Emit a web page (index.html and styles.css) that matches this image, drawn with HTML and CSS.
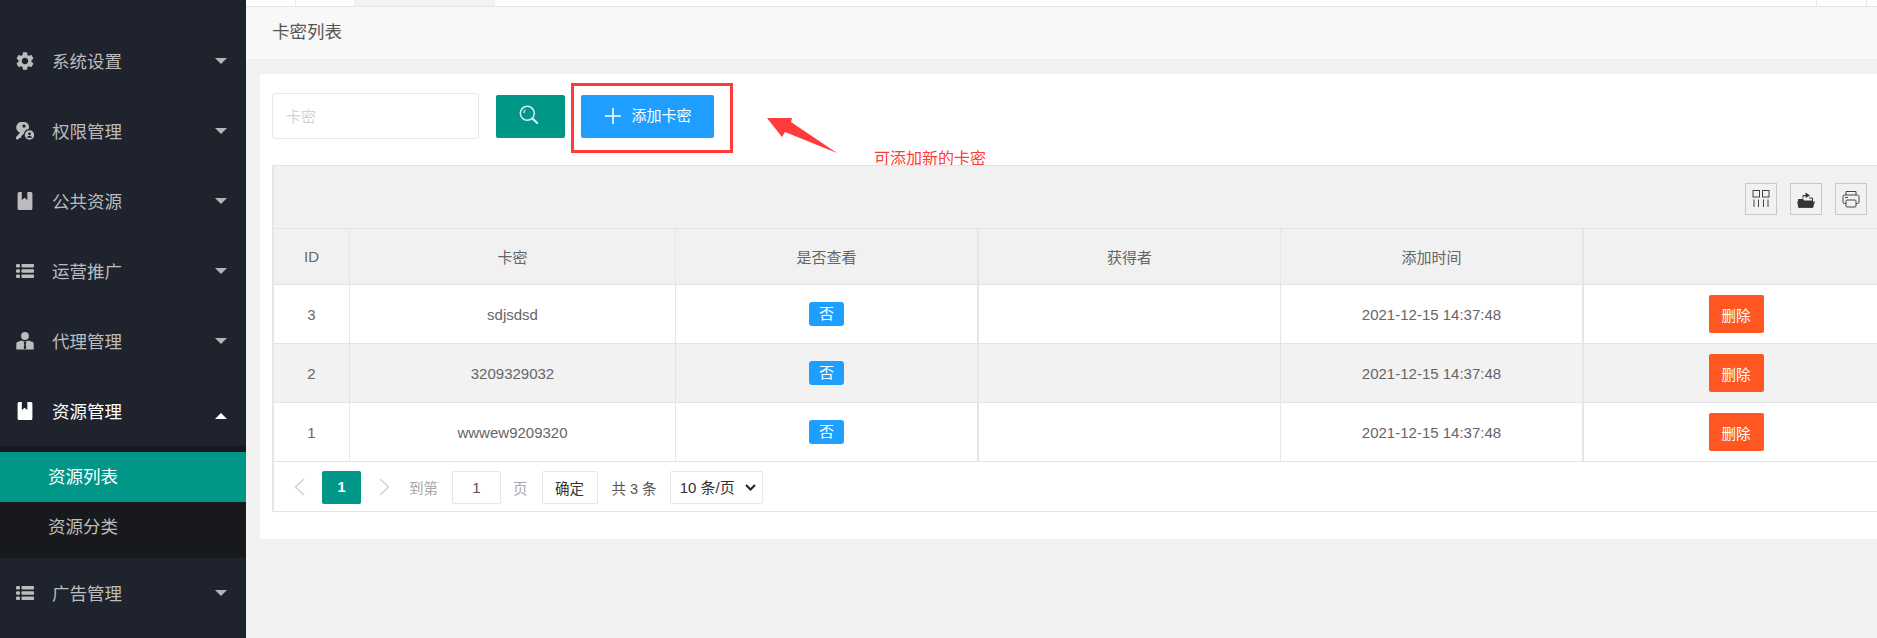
FILE: index.html
```html
<!DOCTYPE html>
<html lang="zh-CN">
<head>
<meta charset="utf-8">
<title>卡密列表</title>
<link rel="stylesheet" href="styles.css">
</head>
<body>
<svg class="defs" width="0" height="0" aria-hidden="true">
  <symbol id="i-book" viewBox="0 0 14 17"><path d="M1.5 0H4v7.5l2.6-2 2.6 2V0h3.3A1.5 1.5 0 0 1 14 1.5v14a1.5 1.5 0 0 1-1.5 1.5h-11A1.5 1.5 0 0 1 0 15.5v-14A1.5 1.5 0 0 1 1.5 0z" fill="currentColor"/></symbol>
  <symbol id="i-list" viewBox="0 0 18 14"><g fill="currentColor"><rect x="0" y="0" width="4" height="3.4" rx="1.2"/><rect x="0" y="5.3" width="4" height="3.4" rx="1.2"/><rect x="0" y="10.6" width="4" height="3.4" rx="1.2"/><rect x="5.5" y="0" width="12.5" height="3.4" rx=".8"/><rect x="5.5" y="5.3" width="12.5" height="3.4" rx=".8"/><rect x="5.5" y="10.6" width="12.5" height="3.4" rx=".8"/></g></symbol>
  <symbol id="i-caret" viewBox="0 0 12 6"><path d="M0 0h12L6 6z" fill="currentColor"/></symbol>
</svg>

<div class="shell">
  <aside class="sidebar">
    <nav class="nav">
      <div class="nav-item nav-stub"><svg class="nav-icon" viewBox="0 0 18 18"><g fill="currentColor"><rect x="1" y="1" width="7" height="7" rx="1"/><rect x="10" y="1" width="7" height="7" rx="1"/><rect x="1" y="10" width="7" height="7" rx="1"/><rect x="10" y="10" width="7" height="7" rx="1"/></g></svg></div>

      <div class="nav-item">
        <svg class="nav-icon" viewBox="2 2 20 20"><path fill="currentColor" d="M19.14 12.94c.04-.3.06-.61.06-.94 0-.32-.02-.64-.07-.94l2.03-1.58a.49.49 0 0 0 .12-.61l-1.92-3.32a.488.488 0 0 0-.59-.22l-2.39.96c-.5-.38-1.03-.7-1.62-.94l-.36-2.54a.484.484 0 0 0-.48-.41h-3.84c-.24 0-.43.17-.47.41l-.36 2.54c-.59.24-1.13.57-1.62.94l-2.39-.96c-.22-.08-.47 0-.59.22L2.74 8.87c-.12.21-.08.47.12.61l2.03 1.58c-.05.3-.09.63-.09.94s.02.64.07.94l-2.03 1.58a.49.49 0 0 0-.12.61l1.92 3.32c.12.22.37.29.59.22l2.39-.96c.5.38 1.03.7 1.62.94l.36 2.54c.05.24.24.41.48.41h3.84c.24 0 .44-.17.47-.41l.36-2.54c.59-.24 1.13-.56 1.62-.94l2.39.96c.22.08.47 0 .59-.22l1.92-3.32c.12-.22.07-.47-.12-.61l-2.01-1.58zM12 15.6c-1.98 0-3.6-1.62-3.6-3.6s1.62-3.6 3.6-3.6 3.6 1.62 3.6 3.6-1.62 3.6-3.6 3.6z"/></svg>
        <span class="nav-label">系统设置</span>
        <svg class="caret"><use href="#i-caret"/></svg>
      </div>

      <div class="nav-item">
        <svg class="nav-icon" viewBox="0 0 18 18"><path fill="currentColor" fill-rule="evenodd" d="M8 0a5 5 0 0 1 4.6 7A5.6 5.6 0 0 0 8 11.5L5.2 14.3 5.2 16 3.4 16 2 17.4.6 17.4 0 16.8 0 15l4-4.2A5 5 0 0 1 8 0zm0 2.4a1.7 1.7 0 1 0 0 3.4 1.7 1.7 0 0 0 0-3.4z"/><circle cx="13.5" cy="13" r="4.7" fill="currentColor"/><circle cx="13.5" cy="11.8" r="1.4" fill="#1f232e"/><path fill="#1f232e" d="M10.9 15.8c.3-1.4 1.3-2.1 2.6-2.1s2.3.7 2.6 2.1z"/></svg>
        <span class="nav-label">权限管理</span>
        <svg class="caret"><use href="#i-caret"/></svg>
      </div>

      <div class="nav-item">
        <svg class="nav-icon"><use href="#i-book"/></svg>
        <span class="nav-label">公共资源</span>
        <svg class="caret"><use href="#i-caret"/></svg>
      </div>

      <div class="nav-item">
        <svg class="nav-icon"><use href="#i-list"/></svg>
        <span class="nav-label">运营推广</span>
        <svg class="caret"><use href="#i-caret"/></svg>
      </div>

      <div class="nav-item">
        <svg class="nav-icon" viewBox="0 0 18 18"><circle cx="9" cy="4" r="3.9" fill="currentColor"/><path fill="currentColor" d="M5.4 8.6 1.4 10C.6 10.300.3 11 .3 11.800V17.500H17.700V11.800C17.700 11 17.400 10.300 16.600 10L12.600 8.600 9 9.800z"/><path fill="#1f232e" d="M8.100 9.900H9.900L10.200 11.200 9.700 12 10.300 16 9 17.500 7.700 16 8.300 12 7.800 11.200z"/></svg>
        <span class="nav-label">代理管理</span>
        <svg class="caret"><use href="#i-caret"/></svg>
      </div>

      <div class="nav-item is-open">
        <svg class="nav-icon"><use href="#i-book"/></svg>
        <span class="nav-label">资源管理</span>
        <svg class="caret caret-up"><use href="#i-caret"/></svg>
      </div>
      <div class="subnav">
        <div class="subnav-item is-active">资源列表</div>
        <div class="subnav-item">资源分类</div>
      </div>

      <div class="nav-item">
        <svg class="nav-icon"><use href="#i-list"/></svg>
        <span class="nav-label">广告管理</span>
        <svg class="caret"><use href="#i-caret"/></svg>
      </div>
    </nav>
  </aside>

  <main class="main">
    <div class="tabs">
      <span class="tab tab-a"></span>
      <span class="tab tab-b"></span>
      <span class="tab tab-c"></span>
      <span class="tab-space"></span>
      <span class="tab tab-d"></span>
      <span class="tab tab-e"></span>
    </div>
    <div class="title-bar">卡密列表</div>

    <section class="card">
      <div class="annot-frame"></div>
      <svg class="annot-arrow" viewBox="0 0 72 37" width="72" height="37"><path d="M0 0H25L24 4 70 35 18 14 15 19z" fill="#ff3b3b"/></svg>
      <div class="annot-text">可添加新的卡密</div>

      <form class="search-row">
        <input class="search-input" type="text" placeholder="卡密">
        <button class="btn btn-search" type="button" aria-label="搜索">
          <svg class="btn-search-icon" viewBox="0 0 20 20" width="20" height="20"><circle cx="8.3" cy="8.3" r="7" fill="none" stroke="currentColor" stroke-width="1.5"/><path d="M5 8a3.6 3.6 0 0 1 1.4-3" fill="none" stroke="currentColor" stroke-width="1.2"/><path d="M13.4 13.4 18.2 18" stroke="currentColor" stroke-width="2.2" stroke-linecap="round"/></svg>
        </button>
        <button class="btn btn-add" type="button">
          <svg class="btn-add-icon" viewBox="0 0 16 16" width="16" height="16"><path d="M8 0v16M0 8h16" stroke="currentColor" stroke-width="1.6"/></svg>
          <span class="btn-add-label">添加卡密</span>
        </button>
      </form>

      <div class="table-box">
        <div class="table-tools">
          <span class="tool">
            <svg viewBox="0 0 18 18" width="18" height="18"><g fill="none" stroke="#444" stroke-width="1"><rect x="1" y=".5" width="6.5" height="6.5"/><rect x="10.5" y=".5" width="6.5" height="6.5"/><path d="M2 9.5V17M6.5 9.5V17M11.5 9.5V17M16 9.5V17"/></g></svg>
          </span>
          <span class="tool">
            <svg viewBox="0 0 18 18" width="18" height="18"><path fill="#333" d="M1 9h5l1.3 1.5H16V17H1.5z"/><path fill="#333" d="M0 11.5h18L16 18H1.5z" opacity=".9"/><path fill="none" stroke="#333" stroke-width="1" d="M6 8.5V5.5h5M15.5 11V8H12"/><path fill="#333" d="M8.5 2.5 13 5.5 8.5 8z"/></svg>
          </span>
          <span class="tool">
            <svg viewBox="0 0 18 18" width="18" height="18"><g fill="none" stroke="#444" stroke-width="1"><path d="M4 5V1.5h10V5"/><path d="M4 13.5H2.5A1.5 1.5 0 0 1 1 12V6.5A1.5 1.5 0 0 1 2.500 5h13A1.500 1.500 0 0 1 17 6.500V12a1.500 1.500 0 0 1-1.500 1.500H14"/><rect x="4" y="10" width="10" height="7" rx="1"/><path d="M3 7.500h3"/></g></svg>
          </span>
        </div>
        <table class="data-table">
          <colgroup>
            <col class="c-id"><col class="c-key"><col class="c-seen"><col class="c-owner"><col class="c-time"><col class="c-ops">
          </colgroup>
          <thead>
            <tr><th>ID</th><th>卡密</th><th class="thick">是否查看</th><th>获得者</th><th class="thick">添加时间</th><th class="last"></th></tr>
          </thead>
          <tbody>
            <tr><td>3</td><td>sdjsdsd</td><td class="thick"><span class="badge">否</span></td><td></td><td class="thick">2021-12-15 14:37:48</td><td class="last"><button class="btn-del" type="button">删除</button></td></tr>
            <tr class="alt"><td>2</td><td>3209329032</td><td class="thick"><span class="badge">否</span></td><td></td><td class="thick">2021-12-15 14:37:48</td><td class="last"><button class="btn-del" type="button">删除</button></td></tr>
            <tr><td>1</td><td>wwwew9209320</td><td class="thick"><span class="badge">否</span></td><td></td><td class="thick">2021-12-15 14:37:48</td><td class="last"><button class="btn-del" type="button">删除</button></td></tr>
          </tbody>
        </table>
        <div class="pager">
          <svg class="pager-arrow" viewBox="0 0 11 18" width="11" height="18"><path d="M10 1 1.500 9 10 17" fill="none" stroke="#d2d2d2" stroke-width="1.500"/></svg>
          <span class="pager-cur">1</span>
          <svg class="pager-arrow pager-next" viewBox="0 0 11 18" width="11" height="18"><path d="M1 1 9.500 9 1 17" fill="none" stroke="#d2d2d2" stroke-width="1.500"/></svg>
          <span class="pager-muted pager-to">到第</span>
          <input class="pager-input" type="text" value="1">
          <span class="pager-muted pager-page">页</span>
          <button class="pager-go" type="button">确定</button>
          <span class="pager-count">共 3 条</span>
          <span class="pager-size-wrap">
            <select class="pager-size"><option>10 条/页</option></select>
            <svg class="pager-size-chev" viewBox="0 0 11 7" width="11" height="7"><path d="M1 1 5.500 5.500 10 1" fill="none" stroke="#222" stroke-width="2"/></svg>
          </span>
        </div>
      </div>
    </section>
  </main>
</div>
</body>
</html>
```

FILE: styles.css
```css
* { box-sizing: border-box; }
html, body { margin: 0; height: 100%; }
body {
  font-family: "Liberation Sans", "Noto Sans CJK SC", sans-serif;
  font-size: 15px;
  color: #666;
  background: #f2f2f2;
  overflow: hidden;
}
.defs { position: absolute; }
.shell { display: flex; height: 638px; overflow: hidden; }

/* sidebar */
.sidebar { flex: 0 0 246px; background: #1f232e; overflow: hidden; }
.nav { margin-top: -44px; }
.nav-item {
  display: flex;
  align-items: center;
  height: 70px;
  padding: 0 19px 0 16px;
  color: #bcbcbc;
}
.nav-item.is-open { color: #fff; }
.nav-icon { flex: 0 0 18px; width: 18px; height: 18px; }
.nav-label { margin-left: 18px; padding-bottom: 2px; font-size: 17.5px; flex: 1; }
.caret { width: 12px; height: 6px; color: #b5b5b5; }
.caret-up { color: #fff; transform: rotate(180deg); margin-top: 9px; }
.subnav { background: #18191d; padding: 6px 0; }
.subnav-item {
  height: 50px;
  line-height: 50px;
  padding-left: 48px;
  font-size: 17.5px;
  color: #bcbcbc;
}
.subnav-item.is-active { background: #009688; color: #fff; }

/* main */
.main { flex: 1; min-width: 0; overflow: hidden; }
.tabs { display: flex; height: 7px; background: #fff; border-bottom: 1px solid #e4e4e4; }
.tab { display: block; }
.tab-a { width: 50px; border-right: 1px solid #eee; }
.tab-b { width: 58px; }
.tab-c { width: 141px; background: #f2f2f2; }
.tab-space { flex: 1; }
.tab-d { width: 50px; border-left: 1px solid #e8e8e8; }
.tab-e { width: 11px; border-left: 1px solid #e8e8e8; }
.title-bar {
  height: 53px;
  line-height: 50px;
  padding-left: 26px;
  font-size: 17.5px;
  color: #555;
  background: #f8f8f8;
  border-bottom: 1px solid #efefef;
}

/* card */
.card {
  position: relative;
  width: 1650px;
  margin: 14px 0 0 14px;
  padding: 19px 0 27px 12px;
  background: #fff;
  border-radius: 3px;
}
.annot-frame {
  position: absolute;
  left: 311px;
  top: 9px;
  width: 162px;
  height: 70px;
  border: 3px solid #ff3b3b;
}
.annot-arrow { position: absolute; left: 507px; top: 44px; }
.annot-text {
  position: absolute;
  left: 614px;
  top: 75px;
  font-size: 16px;
  line-height: 20px;
  white-space: nowrap;
  color: #ff3b3b;
}

.search-row { display: flex; align-items: center; height: 46px; }
.search-input {
  width: 207px;
  height: 46px;
  padding: 0 13px;
  font: inherit;
  border: 1px solid #e6e6e6;
  border-radius: 3px;
  outline: 0;
  background: #fff;
}
.search-input::placeholder { color: #d2d2d2; }
.btn {
  display: flex;
  align-items: center;
  justify-content: center;
  height: 43px;
  border: 0;
  border-radius: 2px;
  color: #fff;
  font: inherit;
  padding: 0;
}
.btn-search { width: 69px; margin-left: 17px; background: #009688; color: #d8f1ee; }
.btn-search-icon { margin-top: -2px; margin-left: -3px; }
.btn-add { width: 133px; margin-left: 16px; padding-left: 2px; background: #1e9fff; }
.btn-add-icon { margin-right: 10px; }
.btn-add-label { padding-bottom: 3px; font-size: 15px; }

/* table */
.table-box { position: relative; width: 1618px; margin-top: 26px; border-left: 2px solid #e6e6e6; }
.table-tools {
  display: flex;
  justify-content: flex-end;
  gap: 13px;
  height: 64px;
  padding: 17px 23px 0 0;
  background: #f1f1f1;
  border-top: 1px solid #e4e4e4;
  border-bottom: 1px solid #e4e4e4;
}
.tool {
  display: flex;
  align-items: center;
  justify-content: center;
  width: 32px;
  height: 32px;
  border: 1px solid #c8c8c8;
}
.data-table { width: 1614px; table-layout: fixed; border-collapse: separate; border-spacing: 0; }
.c-id { width: 76px; }
.c-key { width: 326px; }
.c-seen { width: 303px; }
.c-owner { width: 302px; }
.c-time { width: 303px; }
.c-ops { width: 304px; }
.data-table th, .data-table td {
  padding: 0;
  text-align: center;
  vertical-align: middle;
  font-weight: 400;
  font-size: 15px;
  color: #666;
  border-right: 1px solid #e6e6e6;
  border-bottom: 1px solid #e4e4e4;
}
.data-table th { height: 56px; background: #f1f1f1; }
.data-table td { height: 59px; }
.data-table .thick { border-right-width: 2px; }
.data-table .last { border-right: 0; }
.alt td { background: #f2f2f2; }
.badge {
  display: inline-block;
  width: 35px;
  height: 24px;
  line-height: 24px;
  border-radius: 3px;
  background: #1e9fff;
  color: #fff;
  font-size: 15px;
  vertical-align: middle;
}
.btn-del {
  width: 55px;
  height: 38px;
  padding: 0;
  border: 0;
  border-radius: 2px;
  background: #ff5722;
  color: #fff;
  font: inherit;
  font-size: 14.5px;
  vertical-align: middle;
}

/* pager */
.pager {
  display: flex;
  align-items: center;
  width: 1616px;
  height: 50px;
  padding: 1px 0 0 20px;
  font-size: 14.5px;
  color: #555;
  border-bottom: 1px solid #e4e4e4;
}
.pager-cur {
  width: 39px;
  height: 33px;
  margin-left: 17px;
  line-height: 33px;
  text-align: center;
  font-weight: 700;
  color: #fff;
  background: #009688;
  border-radius: 2px;
}
.pager-next { margin-left: 18px; }
.pager-muted { color: #a8a8a8; }
.pager-to { margin-left: 19px; }
.pager-input {
  width: 49px;
  height: 33px;
  margin-left: 14px;
  text-align: center;
  font: inherit;
  font-size: 15px;
  color: #555;
  border: 1px solid #e6e6e6;
  border-radius: 2px;
  outline: 0;
}
.pager-page { margin-left: 12px; }
.pager-go {
  width: 56px;
  height: 33px;
  margin-left: 14px;
  padding: 0;
  font: inherit;
  color: #333;
  background: #fff;
  border: 1px solid #e6e6e6;
  border-radius: 2px;
}
.pager-count { margin-left: 14px; }
.pager-size-wrap { position: relative; display: block; width: 93px; height: 33px; margin-left: 13px; }
.pager-size {
  display: block;
  width: 93px;
  height: 33px;
  padding-left: 9px;
  appearance: none;
  font: inherit;
  font-size: 15px;
  color: #333;
  background: #fff;
  border: 1px solid #e6e6e6;
  border-radius: 2px;
  outline: 0;
}
.pager-size-chev { position: absolute; right: 7px; top: 13px; }
```
